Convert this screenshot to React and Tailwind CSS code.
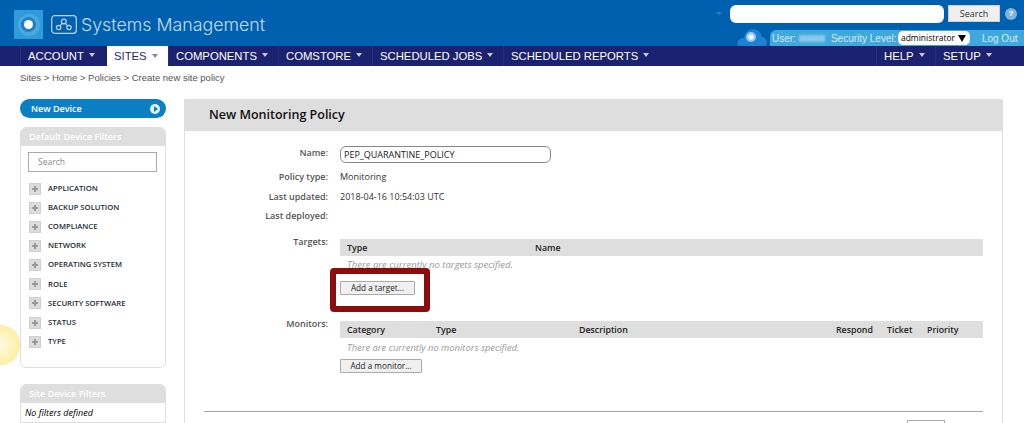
import React from "react";

const Caret = ({ className = "border-t-[#c5c9e0]" }) => (
  <span className={`inline-block ml-[5px] mb-[2px] w-0 h-0 border-x-[3.5px] border-x-transparent border-t-[4px] ${className}`} />
);

const leftNav = [
  { label: "ACCOUNT", width: "w-[87px]" },
  { label: "SITES", width: "w-[61px]", active: true },
  { label: "COMPONENTS", width: "w-[110px]" },
  { label: "COMSTORE", width: "w-[94px]" },
  { label: "SCHEDULED JOBS", width: "w-[131px]" },
  { label: "SCHEDULED REPORTS", width: "w-[160px]" },
];

const filters = [
  "APPLICATION",
  "BACKUP SOLUTION",
  "COMPLIANCE",
  "NETWORK",
  "OPERATING SYSTEM",
  "ROLE",
  "SECURITY SOFTWARE",
  "STATUS",
  "TYPE",
];

function Logo() {
  return (
    <div className="flex items-center">
      <div className="w-[29px] h-[29px] bg-[#2f9bd9] flex items-center justify-center">
        <div className="w-[22px] h-[22px] rounded-full bg-[#4aa9e0] flex items-center justify-center">
          <div className="w-[15px] h-[15px] rounded-full bg-[#1f7fc6] flex items-center justify-center">
            <div className="w-[9px] h-[9px] rounded-full bg-white" />
          </div>
        </div>
      </div>
      <svg width="26" height="19" viewBox="0 0 26 19" fill="none" stroke="#b9d6ee" strokeWidth="1.2" className="ml-[8px]">
        <rect x="0.7" y="0.7" width="24.6" height="17.6" rx="3" />
        <circle cx="12.8" cy="6.5" r="2.4" />
        <circle cx="7.6" cy="12.5" r="2.2" />
        <circle cx="18" cy="12.5" r="2.2" />
        <path d="M11.3 8.4 9 10.7M14.3 8.4 16.5 10.7" />
      </svg>
      <span className="ml-[4px] font-['Inter',sans-serif] font-light text-[17.8px] text-[#c4dcf0] leading-none whitespace-nowrap">
        Systems Management
      </span>
    </div>
  );
}

function TopRight() {
  return (
    <div className="flex flex-col h-[46px] items-end">
      <div className="flex items-center h-[30px] pb-[3px] pr-[7px]">
        <span className="w-0 h-0 mr-[8px] border-x-[3px] border-x-transparent border-t-[3px] border-t-[#2f7fc6]" />
        <div className="w-[214px] h-[18px] rounded-[6px] bg-white" />
        <button className="ml-[4px] w-[52px] h-[17px] bg-[#efefef] border border-[#d0d0d0] font-['Open_Sans',sans-serif] text-[9px] text-[#333] leading-none">
          Search
        </button>
        <span className="ml-[5px] w-[12px] h-[12px] rounded-full bg-[#7fb4dc] text-white text-[8px] leading-[12px] text-center font-bold font-['Liberation_Sans',sans-serif]">
          ?
        </span>
      </div>
      <div className="relative flex items-center h-[16px] w-[254px] bg-[#41a8de] rounded-tl-[6px] font-['Liberation_Sans',sans-serif] text-[10px] text-[#d4ecfa] whitespace-nowrap">
        <span className="ml-[2px] shrink-0">User:</span>
        <span className="ml-[3px] w-[26px] h-[7px] shrink-0 bg-[#8cc8ea] blur-[1px]" />
        <span className="ml-[6px] w-[64px] shrink-0">Security Level:</span>
        <span className="ml-[3px] w-[72px] h-[14px] shrink-0 bg-white rounded-[5px] flex items-center justify-between px-[3px] font-['Open_Sans',sans-serif] text-[8.5px] text-black leading-none">
          administrator
          <span className="w-0 h-0 mr-[1px] border-x-[4px] border-x-transparent border-t-[7px] border-t-black" />
        </span>
        <span className="ml-[12px] shrink-0">Log Out</span>
        {/* cloud sticking out left of the strip */}
        <div className="absolute left-[-34px] top-[-3px] w-[30px] h-[19px]">
          <svg width="32" height="19" viewBox="0 0 32 19">
            <path d="M2 19c-2-4 1-8 6-8 1-6 5-9 9-9s8 3 9 8c4 0 6 5 4 9z" fill="#1f7fd0" />
            <circle cx="15" cy="10" r="5" fill="#8fd0f5" />
            <circle cx="15" cy="10" r="2.6" fill="#ffffff" />
          </svg>
        </div>
      </div>
    </div>
  );
}

function NavItem({ label, width, active }) {
  return (
    <div
      className={`${width} h-full flex items-center text-[11.3px] whitespace-nowrap ${
        active ? "bg-white text-[#222a6e] pl-[7px] pt-[1px]" : "text-white pl-[7px] border-l border-[#252d7c]"
      }`}
    >
      {label}
      <Caret className={active ? "border-t-[#8a8a8a]" : "border-t-[#c5c9e0]"} />
    </div>
  );
}

function Sidebar() {
  return (
    <div className="w-[146px] shrink-0 font-['Open_Sans',sans-serif]">
      <div className="h-[19px] rounded-full bg-[#0b7fc3] flex items-center justify-between pl-[11px] pr-[6px] text-white text-[9px] font-semibold">
        New Device
        <span className="w-[10px] h-[10px] rounded-full bg-[#e6f2fa] flex items-center justify-center">
          <span className="ml-[1px] w-0 h-0 border-y-[3px] border-y-transparent border-l-[4px] border-l-[#0b7fc3]" />
        </span>
      </div>

      <div className="mt-[9px] h-[241px] border border-[#dedede] rounded-[6px] overflow-hidden">
        <div className="h-[18px] bg-[#dedede] pl-[8px] flex items-center text-white text-[9px] font-semibold">
          Default Device Filters
        </div>
        <div className="mt-[6px] ml-[7px] mr-[8px] h-[20px] border border-[#aaa] pl-[9px] flex items-center text-[8.5px] text-[#8a8a8a]">
          Search
        </div>
        <div className="mt-[7px] flex flex-col">
          {filters.map((f) => (
            <div key={f} className="h-[19.15px] flex items-center pl-[8px] text-[7.7px] font-semibold text-[#1d2b36]">
              <span className="relative w-[12px] h-[12px] bg-[#dcdcdc] border border-[#cfcfcf] mr-[7px] flex items-center justify-center">
                <span className="absolute w-[6px] h-[2px] bg-[#9a9a9a]" />
                <span className="absolute w-[2px] h-[6px] bg-[#9a9a9a]" />
              </span>
              {f}
            </div>
          ))}
        </div>
      </div>

      <div className="mt-[16px] border border-[#dedede] rounded-t-[6px] overflow-hidden">
        <div className="h-[18px] bg-[#dedede] pl-[8px] flex items-center text-white text-[9px] font-semibold">
          Site Device Filters
        </div>
        <div className="h-[19px] pl-[4px] flex items-center text-[9px] italic text-black">No filters defined</div>
      </div>
    </div>
  );
}

function Row({ label, className = "", labelClass = "", children }) {
  return (
    <div className={`flex ${className}`}>
      <div className={`w-[143px] shrink-0 text-right text-[#555] font-semibold text-[9px] leading-[12px] ${labelClass}`}>{label}</div>
      <div className="ml-[12px] flex-1 text-[9px] text-[#333] leading-[12px]">{children}</div>
    </div>
  );
}

function TableHead({ cols }) {
  return (
    <div className="w-[643px] h-[17px] bg-[#dedede] flex items-center text-[8.8px] font-semibold text-[#222]">
      {cols.map((c) => (
        <span key={c.label} className={`${c.width} shrink-0 ${c.first ? "pl-[7px]" : ""}`}>
          {c.label}
        </span>
      ))}
    </div>
  );
}

function AddButton({ children, width }) {
  return (
    <button className={`${width} block h-[14px] border border-[#aaa] rounded-[1px] bg-[#f0f0f0] text-[8.2px] text-[#222] leading-none`}>
      {children}
    </button>
  );
}

function PolicyPanel() {
  return (
    <div className="ml-[18px] w-[819px] h-[324px] border-x border-[#dedede] font-['Open_Sans',sans-serif]">
      <div className="-mx-px h-[32px] bg-[#dedede] rounded-t-[3px] pl-[25px] flex items-center text-[12.5px] font-semibold text-[#111]">
        New Monitoring Policy
      </div>

      <Row label="Name:" className="mt-[17px]" labelClass="-mt-[1px]">
        <div className="-mt-[2px] w-[211px] h-[17px] border border-[#888] rounded-[6px] pl-[3px] flex items-center text-[9px] text-[#222]">
          PEP_QUARANTINE_POLICY
        </div>
      </Row>
      <Row label="Policy type:" className="mt-[8px]">Monitoring</Row>
      <Row label="Last updated:" className="mt-[8px]">2018-04-16 10:54:03 UTC</Row>
      <Row label="Last deployed:" className="mt-[7px]" />

      <Row label="Targets:" className="mt-[17px]" labelClass="-mt-[3px]">
        <TableHead
          cols={[
            { label: "Type", width: "w-[195px]", first: true },
            { label: "Name", width: "w-[200px]" },
          ]}
        />
        <div className="h-[25px] pl-[7px] pb-[7px] flex items-center italic text-[9.5px] text-[#999]">
          There are currently no targets specified.
        </div>
        <AddButton width="w-[75px]">Add a target...</AddButton>
      </Row>

      <Row label="Monitors:" className="mt-[26px]" labelClass="-mt-[3px]">
        <TableHead
          cols={[
            { label: "Category", width: "w-[96px]", first: true },
            { label: "Type", width: "w-[143px]" },
            { label: "Description", width: "w-[257px]" },
            { label: "Respond", width: "w-[51px]" },
            { label: "Ticket", width: "w-[40px]" },
            { label: "Priority", width: "w-[40px]" },
          ]}
        />
        <div className="h-[21px] pl-[7px] pb-[2px] flex items-center italic text-[9.4px] text-[#999]">
          There are currently no monitors specified.
        </div>
        <AddButton width="w-[82px]">Add a monitor...</AddButton>
      </Row>

      <div className="mt-[38px] ml-[19px] w-[779px] h-[1px] bg-[#a5a5a5]" />
      <div className="mt-[8px] ml-[722px] w-[38px] h-[10px] border border-b-0 border-[#aaa] rounded-t-[1px]" />
    </div>
  );
}

export default function App() {
  return (
    <div className="relative w-[1024px] h-[423px] overflow-hidden bg-white font-['Liberation_Sans',sans-serif]">
      {/* header */}
      <div className="h-[46px] bg-[#0060b0] flex justify-between pl-[14px]">
        <div className="flex items-start pt-[10px]">
          <Logo />
        </div>
        <TopRight />
      </div>

      {/* main nav */}
      <div className="h-[20px] bg-[#1b2270] flex justify-between pl-[20px] pr-[21px]">
        <div className="flex h-full">
          {leftNav.map((n) => (
            <NavItem key={n.label} {...n} />
          ))}
        </div>
        <div className="flex h-full">
          <NavItem label="HELP" width="w-[59px]" />
          <NavItem label="SETUP" width="w-[68px]" />
        </div>
      </div>

      {/* breadcrumb */}
      <div className="h-[33px] pl-[20px] pt-[6px] text-[9.5px] text-[#555] leading-[12px]">
        Sites &gt; Home &gt; Policies &gt; Create new site policy
      </div>

      <div className="flex pl-[20px]">
        <Sidebar />
        <PolicyPanel />
      </div>

      {/* red annotation around the add target button */}
      <div className="absolute left-[330px] top-[268px] w-[100px] h-[44px] border-[6px] border-[#8c0d0d] rounded-[4px]" />
      {/* click highlight */}
      <div className="absolute left-[-20px] top-[325px] w-[40px] h-[40px] rounded-full bg-[radial-gradient(circle,#fffbe0_0%,#fdf0a8_65%,#eed35f_100%)]" />
    </div>
  );
}
